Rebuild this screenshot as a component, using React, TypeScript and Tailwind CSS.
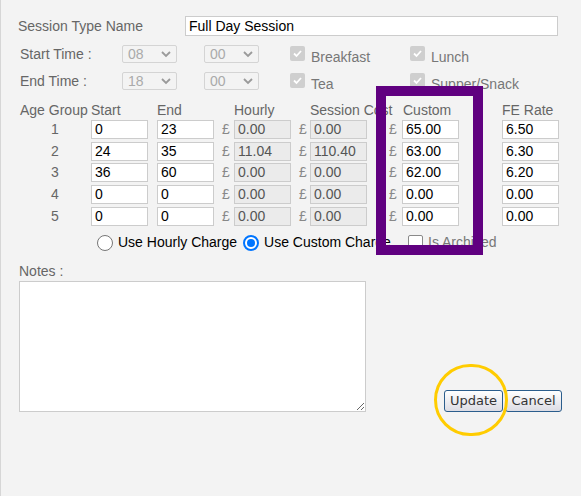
import React from 'react';

const rows = [
  { start: '0', end: '23', hourly: '0.00', cost: '0.00', custom: '65.00', fe: '6.50' },
  { start: '24', end: '35', hourly: '11.04', cost: '110.40', custom: '63.00', fe: '6.30' },
  { start: '36', end: '60', hourly: '0.00', cost: '0.00', custom: '62.00', fe: '6.20' },
  { start: '0', end: '0', hourly: '0.00', cost: '0.00', custom: '0.00', fe: '0.00' },
  { start: '0', end: '0', hourly: '0.00', cost: '0.00', custom: '0.00', fe: '0.00' },
];

const Select = ({ value }: { value: string }) => (
  <div className="flex items-center justify-between w-[55px] h-[18px] border border-[#d4d4d4] rounded-[2px] pl-[5px] pr-[4px] text-[14px] text-[#aaaaaa]">
    <span>{value}</span>
    <svg width="12" height="12" viewBox="0 0 12 12">
      <polyline points="2,4 6,8 10,4" fill="none" stroke="#9a9a9a" strokeWidth="1.8" />
    </svg>
  </div>
);

const Check = ({ label }: { label: string }) => (
  <div className="flex items-start">
    <div className="mt-[1px] w-[15px] h-[15px] rounded-[2px] bg-[#cfcfcf] flex items-center justify-center">
      <svg width="11" height="11" viewBox="0 0 11 11">
        <polyline points="2,5.5 4.5,8 9,3" fill="none" stroke="#ffffff" strokeWidth="1.8" />
      </svg>
    </div>
    <span className="ml-[6px] mt-[3px] leading-[18px] text-[#777] whitespace-nowrap">{label}</span>
  </div>
);

const Field = ({ value, readOnly }: { value: string; readOnly?: boolean }) => (
  <div
    className={`h-[19px] w-[57px] border border-[#cccccc] pl-[3px] text-[14px] leading-[17px] ${
      readOnly ? 'bg-[#ebebeb] text-[#555]' : 'bg-white text-black'
    }`}
  >
    {value}
  </div>
);

const Pound = ({ w }: { w: string }) => <span className={`${w} text-[#888] leading-[19px]`}>£</span>;

export default function App() {
  return (
    <div
      className="relative w-full h-[496px] bg-[#f3f3f3] border-l border-[#d6d6d6] pl-[17px] pt-[16px] text-[14px] text-[#666]"
      style={{ fontFamily: '"Liberation Sans", Arial, sans-serif' }}
    >
      {/* session name */}
      <div className="flex items-center h-[20px]">
        <span className="w-[167px]">Session Type Name</span>
        <div className="w-[373px] h-[20px] border border-[#cccccc] bg-white pl-[3px] text-black leading-[18px]">
          Full Day Session
        </div>
      </div>

      {/* times */}
      <div className="mt-[9px] flex flex-col gap-[9px]">
        {[
          { label: 'Start Time :', h: '08', a: 'Breakfast', b: 'Lunch' },
          { label: 'End Time :', h: '18', a: 'Tea', b: 'Supper/Snack' },
        ].map((r) => (
          <div key={r.label} className="flex items-start h-[18px]">
            <span className="ml-[2px] w-[102px] leading-[18px]">{r.label}</span>
            <Select value={r.h} />
            <div className="ml-[27px]">
              <Select value="00" />
            </div>
            <div className="ml-[31px] w-[120px]">
              <Check label={r.a} />
            </div>
            <Check label={r.b} />
          </div>
        ))}
      </div>

      {/* table */}
      <div className="mt-[12px] pl-[2px]">
        <div className="flex h-[16px] leading-[16px] whitespace-nowrap">
          <span className="w-[71px]">Age Group</span>
          <span className="w-[66px]">Start</span>
          <span className="w-[65px]">End</span>
          <span className="w-[77px] pl-[12px]">Hourly</span>
          <span className="w-[90px] pl-[11px]">Session Cost</span>
          <span className="w-[113px] pl-[14px]">Custom</span>
          <span>FE Rate</span>
        </div>
        <div className="mt-[2px] flex flex-col gap-[2.7px]">
          {rows.map((r, i) => (
            <div key={i} className="flex h-[19px]">
              <span className="w-[71px] text-center leading-[19px] pr-[1px]">{i + 1}</span>
              <div className="w-[66px]">
                <Field value={r.start} />
              </div>
              <div className="w-[65px]">
                <Field value={r.end} />
              </div>
              <div className="w-[77px] flex">
                <Pound w="w-[12px]" />
                <Field value={r.hourly} readOnly />
              </div>
              <div className="w-[90px] flex">
                <Pound w="w-[11px]" />
                <Field value={r.cost} readOnly />
              </div>
              <div className="w-[113px] flex">
                <Pound w="w-[13px]" />
                <Field value={r.custom} />
              </div>
              <Field value={r.fe} />
            </div>
          ))}
        </div>
      </div>

      {/* radios */}
      <div className="mt-[9px] flex items-center h-[16px]">
        <div className="w-[390px] pl-[79px] flex items-center text-black">
          <span className="w-[16px] h-[16px] rounded-full border border-[#767676] bg-white" />
          <span className="ml-[5px]">Use Hourly Charge</span>
          <span className="ml-[6px] w-[16px] h-[16px] rounded-full border-2 border-[#0075ff] bg-white flex items-center justify-center">
            <span className="w-[8px] h-[8px] rounded-full bg-[#0075ff]" />
          </span>
          <span className="ml-[5px] whitespace-nowrap">Use Custom Charge</span>
        </div>
        <span className="w-[15px] h-[15px] rounded-[2px] border border-[#8a8a8a] bg-white" />
        <span className="ml-[5px] text-[#777]">Is Archived</span>
      </div>

      {/* notes */}
      <div className="mt-[12px] ml-[1px] leading-[16px]">Notes :</div>
      <div className="mt-[2px] ml-[1px] flex items-end">
        <textarea className="w-[347px] h-[131px] border border-[#cccccc] bg-white block" />
        <div className="ml-[78px] flex gap-[2px]" style={{ fontFamily: '"DejaVu Sans", Tahoma, sans-serif' }}>
          <button className="w-[59px] h-[22px] rounded-[3px] border border-[#2b5d8c] bg-gradient-to-b from-white to-[#dcdce4] text-[13px] text-[#333]">
            Update
          </button>
          <button className="w-[57px] h-[22px] rounded-[3px] border border-[#2b5d8c] bg-gradient-to-b from-white to-[#dcdce4] text-[13px] text-[#333]">
            Cancel
          </button>
        </div>
      </div>

      {/* annotations */}
      <div className="absolute left-[375px] top-[86px] w-[107px] h-[169px] border-[10px] border-[#600080]" />
      <div className="absolute left-[433px] top-[364px] w-[74px] h-[72px] rounded-full border-[3px] border-[#ffcc00]" />
    </div>
  );
}
